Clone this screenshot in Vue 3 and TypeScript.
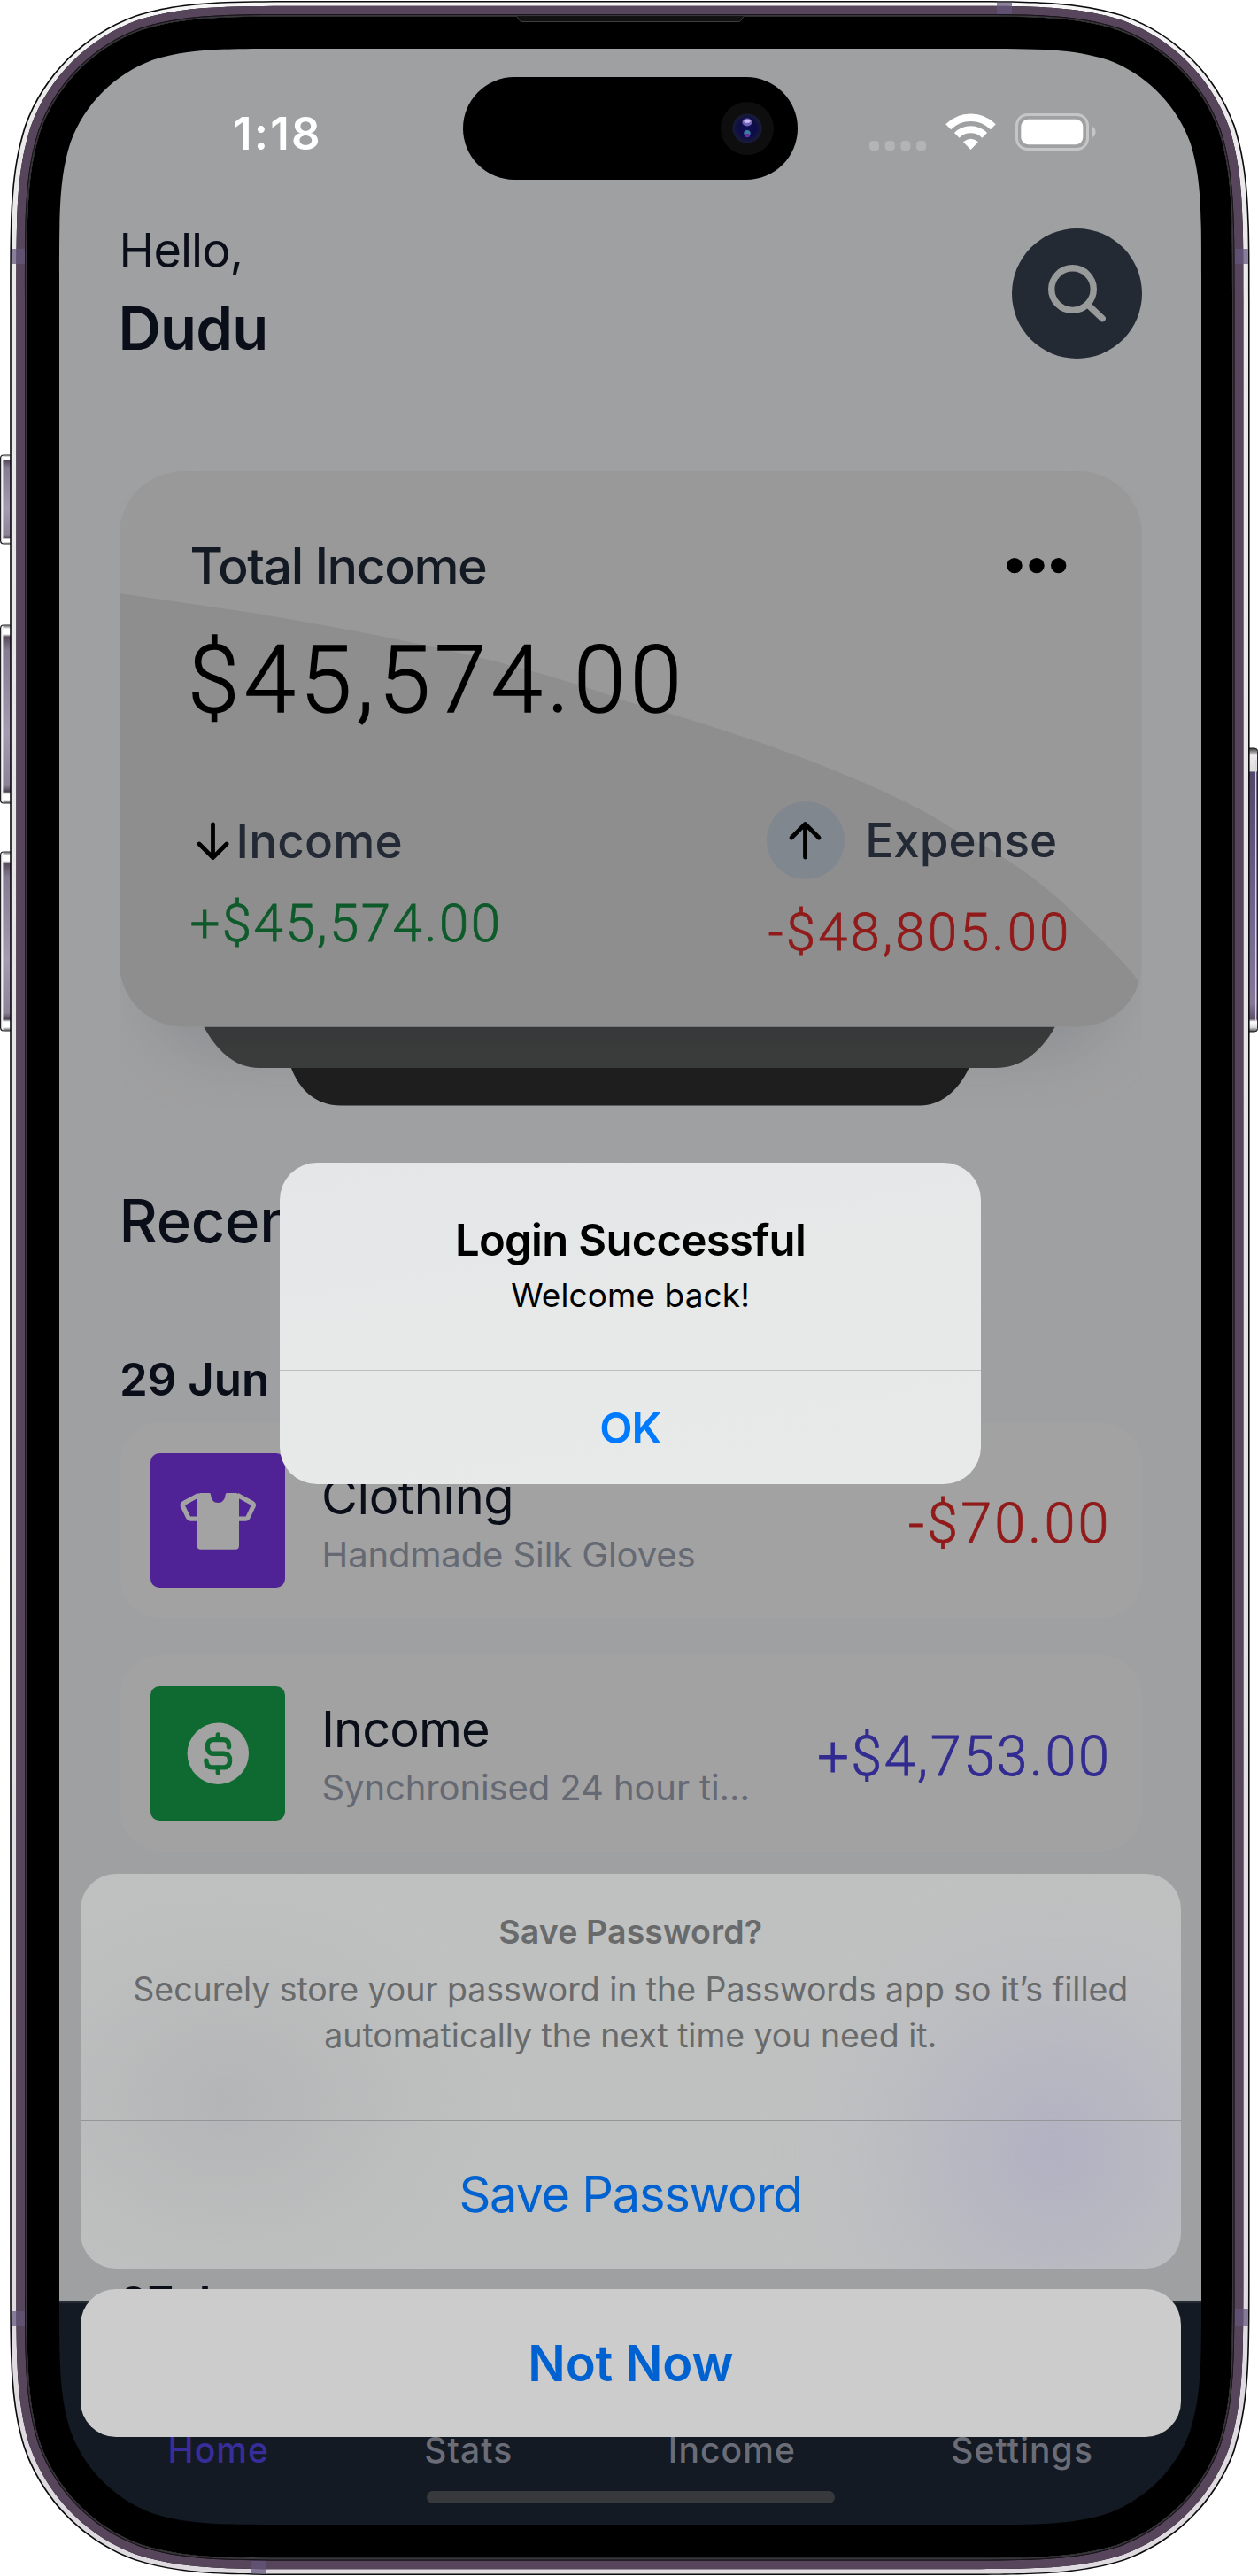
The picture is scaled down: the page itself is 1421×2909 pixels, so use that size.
<script setup lang="ts">
interface Transaction {
  id: number
  title: string
  note: string
  amount: string
  kind: 'clothing' | 'income'
}

const transactions: Transaction[] = [
  { id: 1, title: 'Clothing', note: 'Handmade Silk Gloves', amount: '-$70.00', kind: 'clothing' },
  { id: 2, title: 'Income', note: 'Synchronised 24 hour ti...', amount: '+$4,753.00', kind: 'income' },
]

const tabs: string[] = ['Home', 'Stats', 'Income', 'Settings']
const activeTab = 'Home'

/** Rounded rectangle with continuous-curvature corners. */
function squircle(x: number, y: number, w: number, h: number, r: number): string {
  const a = 1.52866 * r
  const b = 1.08849 * r
  const c = 0.86841 * r
  const d = 0.63149 * r
  const e = 0.07491 * r
  const f = 0.37282 * r
  const g = 0.16906 * r
  const R = x + w
  const B = y + h
  return [
    `M${x + a} ${y}H${R - a}`,
    `C${R - b} ${y} ${R - c} ${y} ${R - d} ${y + e}`,
    `C${R - f} ${y + g} ${R - g} ${y + f} ${R - e} ${y + d}`,
    `C${R} ${y + c} ${R} ${y + b} ${R} ${y + a}V${B - a}`,
    `C${R} ${B - b} ${R} ${B - c} ${R - e} ${B - d}`,
    `C${R - g} ${B - f} ${R - f} ${B - g} ${R - d} ${B - e}`,
    `C${R - c} ${B} ${R - b} ${B} ${R - a} ${B}H${x + a}`,
    `C${x + b} ${B} ${x + c} ${B} ${x + d} ${B - e}`,
    `C${x + f} ${B - g} ${x + g} ${B - f} ${x + e} ${B - d}`,
    `C${x} ${B - c} ${x} ${B - b} ${x} ${B - a}V${y + a}`,
    `C${x} ${y + b} ${x} ${y + c} ${x + e} ${y + d}`,
    `C${x + g} ${y + f} ${x + f} ${y + g} ${x + d} ${y + e}`,
    `C${x + c} ${y} ${x + b} ${y} ${x + a} ${y}Z`,
  ].join('')
}

const screenPath = squircle(67, 55, 1290, 2796, 168)
const outline = squircle(11.2, 1, 1400.4, 2907, 223)
const rim = squircle(12.8, 2.4, 1397.2, 2904.2, 222)
const band = squircle(18.4, 6.8, 1386, 2894.4, 216)
const seam = squircle(28, 16, 1366.4, 2875.4, 207)
const seamLight = squircle(28.9, 17, 1364.6, 2873.4, 206)
const glass = squircle(30.4, 18.6, 1361.6, 2870.2, 204)
const bezel = glass + screenPath

const leftButtons = [
  { y: 514, h: 100 },
  { y: 706, h: 201 },
  { y: 962, h: 202 },
]
</script>

<template>
  <div class="device">
    <div class="screen">
      <div class="status">
        <span class="time">1:18</span>
        <div class="indicators">
          <svg class="signal" width="65" height="11" viewBox="0 0 65 11">
            <rect v-for="n in 4" :key="n" :x="(n - 1) * 17.7" width="11" height="11" rx="4" fill="#b3b4b5" />
          </svg>
          <svg class="wifi" width="57" height="42" viewBox="0 0 57 42">
            <path d="M3.2 15.2A35.8 35.8 0 0 1 53.8 15.2" fill="none" stroke="#fff" stroke-width="8.4" />
            <path d="M12.8 24.8A22.2 22.2 0 0 1 44.2 24.8" fill="none" stroke="#fff" stroke-width="8" />
            <path d="M28.5 41L20 32.3Q28.5 25.3 37 32.3Z" fill="#fff" />
          </svg>
          <svg class="battery" width="91" height="42" viewBox="0 0 91 42">
            <rect x="1.5" y="1.5" width="80" height="39" rx="12" fill="none" stroke="#c5c6c7" stroke-width="3" />
            <rect x="6.3" y="6.8" width="70" height="28.4" rx="8" fill="#fff" />
            <path d="M86 14.5Q90.5 16 90.5 21Q90.5 26 86 27.5Z" fill="#c5c6c7" />
          </svg>
        </div>
      </div>

      <div class="island">
        <svg width="60" height="60" viewBox="0 0 60 60">
          <defs>
            <radialGradient id="lens">
              <stop offset="0" stop-color="#12105a" />
              <stop offset="0.55" stop-color="#0d0c46" />
              <stop offset="1" stop-color="#191c38" />
            </radialGradient>
          </defs>
          <circle cx="30" cy="30" r="30" fill="#0e0e0f" />
          <circle cx="30" cy="30" r="16.6" fill="url(#lens)" />
          <ellipse cx="30" cy="23" rx="5.6" ry="4.4" fill="#7464b8" />
          <ellipse cx="30" cy="21.8" rx="3.6" ry="2" fill="#c9bdf0" />
          <circle cx="30" cy="35.6" r="3.7" fill="#3a7f9e" />
          <ellipse cx="30" cy="38" rx="3" ry="2.2" fill="#6a2fa8" />
        </svg>
      </div>

      <header class="header">
        <div>
          <div class="hello">Hello,</div>
          <div class="name">Dudu</div>
        </div>
        <button class="search" aria-label="Search">
          <svg width="147" height="147" viewBox="0 0 147 147" fill="none" stroke="#999a9a" stroke-width="7.4" stroke-linecap="round">
            <circle cx="68.5" cy="68.6" r="23.8" />
            <path d="M85.6 85.8L102.2 101.7" />
          </svg>
        </button>
      </header>

      <section class="wallet">
        <svg class="wallet-bg" width="1155" height="718" viewBox="0 0 1155 718">
          <defs>
            <filter id="soft" x="-20%" y="-20%" width="140%" height="150%">
              <feGaussianBlur stdDeviation="32" />
            </filter>
            <linearGradient id="strip" x1="0" y1="0" x2="0" y2="1">
              <stop offset="0" stop-color="#363839" />
              <stop offset="0.6" stop-color="#3a3b3b" />
            </linearGradient>
            <clipPath id="cardShape">
              <rect y="1" width="1155" height="627.5" rx="72" />
            </clipPath>
          </defs>
          <rect x="26" y="60" width="1103" height="604" rx="90" fill="#84878b" opacity=".62" filter="url(#soft)" />
          <path d="M193.5 674H960C947 703 925 717.5 905 717.5H250C222 717.5 203 700 193.5 674Z" fill="#1e1e1e" />
          <path d="M95 628H1057C1039 661 1015 675 990 675H158C132 675 111 658 95 628Z" fill="url(#strip)" />
          <g clip-path="url(#cardShape)">
            <rect width="1155" height="629" fill="#999" />
            <path d="M0 139L150 161C320 190 450 216 576 262C720 301 870 358 938 403C1010 440 1050 472 1085 507C1120 541 1137 558 1152 578L1140 629H0Z" fill="#8e8e8e" />
          </g>
        </svg>

        <div class="wallet-body">
          <div class="wallet-head">
            <span class="wallet-title">Total Income</span>
            <svg width="68" height="20" viewBox="0 0 68 20">
              <circle cx="9" cy="9.6" r="8.7" />
              <circle cx="34" cy="9.6" r="8.7" />
              <circle cx="58.7" cy="9.6" r="8.7" />
            </svg>
          </div>
          <div class="total">$45,574.00</div>
          <div class="flows">
            <div class="flow in">
              <div class="flow-label">
                <svg width="52" height="52" viewBox="0 0 52 52" class="stroke">
                  <path d="M25.5 7V44M10 29L25.5 44.5L41 29" />
                </svg>
                <span>Income</span>
              </div>
              <div class="flow-amount">+$45,574.00</div>
            </div>
            <div class="flow out">
              <div class="flow-label">
                <span class="badge">
                  <svg width="52" height="52" viewBox="0 0 52 52" class="stroke">
                    <path d="M25.5 45V8M10 23L25.5 7.5L41 23" />
                  </svg>
                </span>
                <span>Expense</span>
              </div>
              <div class="flow-amount">-$48,805.00</div>
            </div>
          </div>
        </div>
      </section>

      <section class="recent">
        <h2>Recent</h2>
        <h3>29 Jun</h3>
        <ul>
          <li v-for="t in transactions" :key="t.id" class="item" :class="t.kind">
            <span class="icon">
              <svg v-if="t.kind === 'clothing'" width="152" height="152" viewBox="0 0 152 152">
                <path
                  d="M56 45H66.5Q68 45 68.1 47C68.6 52.6 71.4 56 76.3 56S84.1 52.6 84.6 47Q84.8 45 86.2 45H97L100 46.5V104.5Q100 108.7 96 108.7H56.7Q52.6 108.7 52.6 104.5V46.5Z"
                  fill="#a3a3a3"
                />
                <path
                  d="M98 47.3L115.2 56.6Q117 57.8 116.2 59.7L110.2 72.2Q109.2 74.2 107.4 74.2H98M54.6 47.3L37.4 56.6Q35.6 57.8 36.4 59.7L42.4 72.2Q43.4 74.2 45.2 74.2H54.6"
                  fill="none" stroke="#a3a3a3" stroke-width="5.2" stroke-linejoin="round"
                />
              </svg>
              <svg v-else width="152" height="152" viewBox="0 0 152 152">
                <circle cx="76.3" cy="76.2" r="34.7" fill="#a3a3a3" />
                <path
                  d="M76.3 55V60.5M76.3 91.8V97.8M88.5 68.7V67Q88.5 60.6 82 60.6H71Q64.4 60.6 64.4 68.4T71 76.2H82.5Q89.6 76.2 89.6 84T82.5 91.9H70Q62.9 91.9 62.9 84.2"
                  fill="none" stroke="#0f6a31" stroke-width="5.4" stroke-linecap="round"
                />
              </svg>
            </span>
            <div class="item-text">
              <div class="item-title">{{ t.title }}</div>
              <div class="item-note">{{ t.note }}</div>
            </div>
            <span class="item-amount">{{ t.amount }}</span>
          </li>
        </ul>
        <h3 class="later">27 Jun</h3>
      </section>

      <nav class="tabs">
        <span v-for="tab in tabs" :key="tab" class="tab" :class="{ active: tab === activeTab }">{{ tab }}</span>
        <i class="home-bar"></i>
      </nav>

      <div class="alert" role="alertdialog">
        <div class="alert-text">
          <strong>Login Successful</strong>
          <p>Welcome back!</p>
        </div>
        <button>OK</button>
      </div>

      <div class="sheet">
        <div class="sheet-card">
          <div class="sheet-text">
            <strong>Save Password?</strong>
            <p>Securely store your password in the Passwords app so it’s filled<br />automatically the next time you need it.</p>
          </div>
          <button>Save Password</button>
        </div>
        <button class="cancel">Not Now</button>
      </div>
    </div>

    <svg class="frame" width="1421" height="2909" viewBox="0 0 1421 2909">
      <defs>
        <linearGradient id="btn" x1="0" y1="0" x2="0" y2="1">
          <stop offset="0" stop-color="#555" />
          <stop offset="0.02" stop-color="#fff" />
          <stop offset="0.05" stop-color="#fff" />
          <stop offset="0.065" stop-color="#574b5d" />
          <stop offset="0.14" stop-color="#857b92" />
          <stop offset="0.6" stop-color="#a59cb3" />
          <stop offset="0.9" stop-color="#8d8398" />
          <stop offset="0.935" stop-color="#4c4352" />
          <stop offset="0.95" stop-color="#fff" />
          <stop offset="0.98" stop-color="#fff" />
          <stop offset="1" stop-color="#444" />
        </linearGradient>
        <linearGradient id="power" x1="0" y1="0" x2="0" y2="1">
          <stop offset="0" stop-color="#333" />
          <stop offset="0.025" stop-color="#eee" />
          <stop offset="0.08" stop-color="#ddd" />
          <stop offset="0.085" stop-color="#51476a" />
          <stop offset="0.5" stop-color="#6a6088" />
          <stop offset="0.9" stop-color="#86799a" />
          <stop offset="0.955" stop-color="#5c4f66" />
          <stop offset="0.965" stop-color="#fff" />
          <stop offset="0.985" stop-color="#ddd" />
          <stop offset="1" stop-color="#444" />
        </linearGradient>
        <linearGradient id="rimFill" x1="0" y1="0" x2="0" y2="1">
          <stop offset="0" stop-color="#f6f6f6" />
          <stop offset="0.04" stop-color="#ebeaeb" />
          <stop offset="1" stop-color="#dedae0" />
        </linearGradient>
        <clipPath id="body"><path :d="rim + glass" clip-rule="evenodd" /></clipPath>
      </defs>

      <g v-for="b in leftButtons" :key="b.y">
        <rect x="0.6" :y="b.y" width="14" :height="b.h" rx="3.5" fill="#f4f4f4" stroke="#1c1a1e" stroke-width="1.2" />
        <rect x="3.4" :y="b.y" width="10" :height="b.h" rx="2" fill="url(#btn)" />
      </g>
      <rect x="1406" y="845" width="14.6" height="320" rx="3.5" fill="url(#power)" stroke="#1c1a1e" stroke-width="1" />
      <path d="M1418.6 858V1153" stroke="#d9d5e0" stroke-width="1.2" />

      <path :d="outline + glass" fill-rule="evenodd" fill="#0b0a0c" />
      <path :d="rim + band" fill-rule="evenodd" fill="url(#rimFill)" />
      <path :d="band + seam" fill-rule="evenodd" fill="#57455c" />
      <path :d="seam + seamLight" fill-rule="evenodd" fill="#1a151c" />
      <path :d="seamLight + glass" fill-rule="evenodd" fill="#3a383c" />
      <path :d="bezel" fill-rule="evenodd" fill="#000" />

      <g clip-path="url(#body)" fill="#64567c" opacity=".72">
        <rect x="12" y="281" width="16" height="17" />
        <rect x="1395" y="281" width="16" height="17" />
        <rect x="12" y="2610" width="16" height="17" />
        <rect x="1395" y="2608" width="16" height="19" />
        <rect x="1126" y="2" width="17" height="14" />
        <rect x="283" y="2892" width="18" height="15" />
      </g>
      <path d="M582.5 17.6C585 18 585 24.5 590 24.5H834C838.5 24.5 838.5 18 841.5 17.6Z" fill="#121212" stroke="#3d3d3f" stroke-width="1" />
    </svg>
  </div>
</template>

<style>
body {
  background: #fff;
}
</style>

<style scoped>
.device {
  position: relative;
  width: 1421px;
  height: 2909px;
  padding: 55px 0 0 67px;
  box-sizing: border-box;
  overflow: hidden;
  font-family: Inter, 'Liberation Sans', sans-serif;
}

.frame {
  position: absolute;
  inset: 0;
  pointer-events: none;
}

.screen {
  position: relative;
  width: 1290px;
  height: 2796px;
  border-radius: 150px;
  overflow: hidden;
  background: #9fa0a1;
}

svg {
  display: block;
  flex: none;
}

button {
  border: 0;
  padding: 0;
  font: inherit;
  background: none;
}

h2,
h3,
p,
ul {
  margin: 0;
  padding: 0;
}

/* Status bar */
.status {
  display: flex;
  justify-content: space-between;
  align-items: flex-start;
  height: 180px;
  box-sizing: border-box;
  padding: 65.9px 119.5px 0 196px;
}

.time {
  font-size: 51px;
  font-weight: 600;
  line-height: 60px;
  letter-spacing: 2.2px;
  color: #fff;
}

.indicators {
  display: flex;
  align-items: flex-end;
  padding-top: 7.1px;
}

.wifi {
  margin: 0 22px 0 20.5px;
}

.island {
  position: absolute;
  left: 456px;
  top: 32px;
  width: 378px;
  height: 116px;
  border-radius: 58px;
  background: #000;
  display: flex;
  align-items: center;
  justify-content: flex-end;
  box-sizing: border-box;
  padding-right: 27px;
}

/* Header */
.header {
  display: flex;
  justify-content: space-between;
  align-items: flex-start;
  height: 296px;
  box-sizing: border-box;
  padding: 12.4px 66.8px 0 67.5px;
  color: #0a0e19;
}

.hello {
  font-size: 54px;
  line-height: 72px;
  letter-spacing: -1.03px;
}

.name {
  margin: 7.5px 0 0 -1px;
  font-size: 67px;
  font-weight: 600;
  line-height: 88px;
  letter-spacing: -0.8px;
}

.search {
  margin-top: 10.3px;
  border-radius: 50%;
  background: #232a34;
}

/* Wallet */
.wallet {
  position: relative;
  width: 1155px;
  height: 718px;
  margin: 0 auto;
}

.wallet-bg {
  position: absolute;
  inset: 0;
}

.wallet-body {
  position: relative;
  padding: 70px 85px 0 80px;
}

.wallet-head {
  display: flex;
  justify-content: space-between;
  align-items: center;
}

.wallet-title {
  font-size: 57.5px;
  font-weight: 500;
  line-height: 76px;
  letter-spacing: -1.53px;
  color: #141a24;
}

.total,
.flow-amount,
.item-amount {
  font-family: Roboto, sans-serif;
  font-weight: 300;
  white-space: nowrap;
  -webkit-text-stroke: 0.8px currentColor;
}

.total {
  margin: 27px 0 0 -2.5px;
  font-size: 105px;
  line-height: 130px;
  letter-spacing: 5.2px;
  color: #000;
  -webkit-text-stroke-width: 1.4px;
}

.flows {
  display: flex;
  justify-content: space-between;
  align-items: flex-start;
  margin-top: 71px;
}

.flow-label {
  display: flex;
  align-items: center;
  font-size: 53px;
  font-weight: 500;
  line-height: 72px;
  color: #232a35;
}

.stroke {
  fill: none;
  stroke: #000;
  stroke-width: 4.8;
  stroke-linecap: round;
  stroke-linejoin: round;
}

.flow-amount {
  font-size: 60px;
  line-height: 76px;
}

.in {
  padding-top: 9px;
}

.in .flow-label {
  letter-spacing: 0.2px;
}

.in .flow-amount {
  margin-top: 18.5px;
  letter-spacing: 2.45px;
  color: #0e5a2b;
}

.out {
  width: 339px;
}

.out .flow-label {
  gap: 23.8px;
}

.out .flow-amount {
  margin: 21.5px 0 0 2px;
  letter-spacing: 3.05px;
  color: #911a1a;
}

.badge {
  display: flex;
  align-items: center;
  justify-content: center;
  width: 88px;
  height: 88px;
  border-radius: 50%;
  background: #80878e;
}

/* Transactions */
.recent {
  padding: 86px 67.5px 0;
  color: #0a0e19;
}

h2 {
  font-size: 67px;
  font-weight: 500;
  line-height: 88px;
  letter-spacing: -0.3px;
}

h3 {
  margin: 101.8px 0 15.2px 0.5px;
  font-size: 51px;
  font-weight: 600;
  line-height: 66px;
}

h3.later {
  margin-top: 477px;
}

ul {
  display: flex;
  flex-direction: column;
  gap: 41px;
  list-style: none;
}

.item {
  display: flex;
  align-items: center;
  height: 222px;
  box-sizing: border-box;
  padding: 0 34px 0 35.5px;
  border-radius: 48px;
  background: #a2a2a2;
}

.icon {
  width: 152px;
  height: 152px;
  border-radius: 10px;
  overflow: hidden;
}

.clothing .icon {
  background: #4f2396;
}

.income .icon {
  background: #0f6a31;
}

.item-text {
  flex: 1;
  margin: 5.4px 0 0 41px;
}

.item-title {
  font-size: 56px;
  line-height: 66px;
  letter-spacing: -0.4px;
}

.income .item-title {
  letter-spacing: -0.95px;
}

.item-note {
  margin: 6.4px 0 0 0.5px;
  font-size: 40px;
  line-height: 52px;
  letter-spacing: -0.1px;
  color: #656973;
}

.item-amount {
  margin-top: 8px;
  font-size: 63px;
  line-height: 80px;
}

.clothing .item-amount {
  letter-spacing: 3.1px;
  color: #911a1a;
}

.income .item-amount {
  letter-spacing: 2.5px;
  color: #322b91;
}

/* Tab bar */
.tabs {
  position: absolute;
  left: 0;
  right: 0;
  bottom: 0;
  height: 252px;
  box-sizing: border-box;
  padding: 141px 122px 0 122.5px;
  display: flex;
  justify-content: space-between;
  background: #141a23;
  border-top: 2px solid #252b33;
}

.tab {
  font-size: 39px;
  font-weight: 500;
  line-height: 50px;
  letter-spacing: 1.1px;
  color: #6a6d77;
}

.tab.active {
  color: #382d9b;
}

.home-bar {
  position: absolute;
  left: 415px;
  bottom: 24px;
  width: 461px;
  height: 14px;
  border-radius: 7px;
  background: #38393c;
}

/* Alert */
.alert {
  position: absolute;
  left: 249px;
  top: 1257.5px;
  width: 792px;
  height: 363.5px;
  display: flex;
  flex-direction: column;
  border-radius: 42px;
  overflow: hidden;
  text-align: center;
  color: #000;
  background: linear-gradient(170deg, #e4e6e8, #e6e9e8 45%, #e8eae9);
}

.alert-text {
  height: 235px;
  box-sizing: border-box;
  padding-top: 58.3px;
  border-bottom: 1.5px solid #bdbfbf;
}

.alert strong {
  display: block;
  font-size: 49px;
  font-weight: 600;
  line-height: 60px;
  letter-spacing: -0.68px;
}

.alert p {
  margin-top: 9px;
  font-size: 37px;
  line-height: 46px;
  letter-spacing: 0.08px;
}

.alert button {
  flex: 1;
  padding-top: 1.5px;
  font-size: 48.5px;
  font-weight: 600;
  letter-spacing: -1px;
  color: #007aff;
}

/* Save password sheet */
.sheet {
  position: absolute;
  left: 23.5px;
  top: 2061px;
  width: 1243.5px;
  display: flex;
  flex-direction: column;
  gap: 23.5px;
  text-align: center;
}

.sheet-card {
  display: flex;
  flex-direction: column;
  height: 445.5px;
  border-radius: 40px;
  overflow: hidden;
  background:
    radial-gradient(circle 330px at 1100px 314px, #b3b1c2 0, #b4b3c2e0 18%, #b7b6c2a8 42%, #bbbbc25c 68%, #bfc1c000 100%),
    radial-gradient(ellipse 330px 260px at 165px 255px, #b4b5b7 0, #b6b7b8b3 35%, #babbbc66 68%, #bfc1c000 100%),
    #bfc1c0;
}

.sheet-text {
  height: 279px;
  box-sizing: border-box;
  padding-top: 41.8px;
  border-bottom: 1.5px solid #94969a;
  color: #686a6b;
}

.sheet strong {
  display: block;
  font-size: 37.5px;
  font-weight: 600;
  line-height: 48px;
  letter-spacing: 0.1px;
}

.sheet p {
  margin-top: 15px;
  font-size: 37.5px;
  line-height: 52px;
  letter-spacing: -0.04px;
  white-space: nowrap;
}

.sheet button {
  flex: 1;
  font-size: 56px;
  letter-spacing: -1.3px;
  color: #0062d1;
}

.sheet .cancel {
  flex: none;
  height: 167px;
  border-radius: 40px;
  font-weight: 600;
  letter-spacing: -0.2px;
  background: #ccc;
}
</style>
